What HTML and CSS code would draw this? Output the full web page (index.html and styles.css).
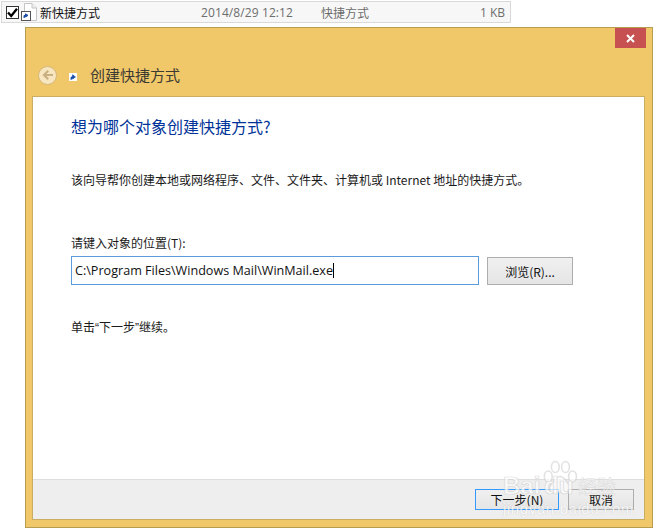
FILE: index.html
```html
<!DOCTYPE html>
<html lang="zh-CN">
<head>
<meta charset="utf-8">
<title>创建快捷方式</title>
<link rel="stylesheet" href="styles.css">
</head>
<body>
<div class="file-row">
  <span class="check"><svg width="11" height="11" viewBox="0 0 11 11"><path d="M1 5.5 4.2 9 10 1.8" fill="none" stroke="#000" stroke-width="2.4"/></svg></span>
  <svg class="file-icon" width="16" height="18" viewBox="0 0 16 18">
    <path d="M3.5.5H11L15.5 5V17.5H3.5Z" fill="#fff" stroke="#c4c4c4"/>
    <path d="M11 .5V5H15.5" fill="#f0f0f0" stroke="#c4c4c4"/>
    <rect x=".5" y="8.5" width="9" height="9" fill="#fff" stroke="#555"/>
    <path d="M3 15V12.5H6M4.5 10.8 7 12.4 4.5 14Z" fill="#1c4fa8" stroke="#1c4fa8"/>
  </svg>
  <span class="file-name">新快捷方式</span>
  <span class="file-date">2014/8/29 12:12</span>
  <span class="file-type">快捷方式</span>
  <span class="file-size">1 KB</span>
</div>
<div class="window">
  <div class="titlebar">
    <span class="close"><svg width="9" height="9" viewBox="0 0 9 9"><path d="M1 1 8 8M8 1 1 8" stroke="#fff" stroke-width="2"/></svg></span>
  </div>
  <div class="header">
    <span class="back"><svg width="12" height="12" viewBox="0 0 12 12"><path d="M11 6H2.5M6.2 1.8 2 6 6.2 10.2" fill="none" stroke="#c9b184" stroke-width="2.2"/></svg></span>
    <svg class="small-icon" width="8" height="8" viewBox="0 0 8 8"><rect width="8" height="8" fill="#fff"/><path d="M2 7V4H4.5M3.6 1.8 6.4 4 3.6 6Z" fill="#1c4fa8" stroke="#1c4fa8" stroke-width=".8"/></svg>
    <span class="title">创建快捷方式</span>
  </div>
  <div class="panel">
    <div class="main">
      <h1 class="heading">想为哪个对象创建快捷方式?</h1>
      <p class="intro">该向导帮你创建本地或网络程序、文件、文件夹、计算机或 Internet 地址的快捷方式。</p>
      <label class="field-label">请键入对象的位置(T):</label>
      <div class="field-row">
        <div class="input"><span class="value">C:\Program Files\Windows Mail\WinMail.exe</span><span class="caret"></span></div>
        <span class="btn browse">浏览(R)...</span>
      </div>
      <p class="hint">单击“下一步”继续。</p>
    </div>
    <div class="footer">
      <span class="btn next">下一步(N)</span>
      <span class="btn cancel">取消</span>
    </div>
  </div>
</div>
<div class="watermark">
  <svg class="paw" width="36" height="36" viewBox="0 0 46 44">
    <g fill="#fff" stroke="#d6d6d6" stroke-width="2">
      <ellipse cx="8" cy="20" rx="5" ry="7"/>
      <ellipse cx="17" cy="8" rx="5" ry="7"/>
      <ellipse cx="30" cy="8" rx="5" ry="7"/>
      <ellipse cx="39" cy="20" rx="5" ry="7"/>
      <path d="M23 20C17 20 15 27 11 31 7 36 11 42 17 41 21 40 26 40 30 41 36 42 39 36 35 31 31 27 29 20 23 20Z"/>
    </g>
  </svg>
  <span class="wm-brand">Bai</span>
  <span class="wm-du">du</span>
  <span class="wm-cn">经验</span>
  <span class="wm-url">jingyan.baidu.com</span>
</div>
</body>
</html>
```
FILE: styles.css
```css
* { box-sizing: border-box; }
html, body { margin: 0; padding: 0; }
body {
  width: 655px;
  height: 531px;
  overflow: hidden;
  position: relative;
  background: #fff;
  font-family: "Noto Sans CJK SC", "Noto Sans", sans-serif;
  font-size: 12px;
  color: #1a1a1a;
}
.file-row {
  display: flex;
  align-items: center;
  width: 510px;
  height: 22px;
  margin: 1px 0 0 1px;
  border: 1px solid #d9d9d9;
  background: #f7f7f7;
}
.check {
  display: flex;
  align-items: center;
  justify-content: center;
  width: 13px;
  height: 13px;
  margin-left: 4px;
  border: 1px solid #333;
  background: #fff;
}
.file-icon { margin-left: 2px; }
.file-name { margin-left: 3px; width: 161px; color: #111; }
.file-date { width: 120px; color: #6d6d6d; font-family: "Open Sans", sans-serif; letter-spacing: .1px; }
.file-type { width: 159px; color: #6d6d6d; }
.file-size { color: #6d6d6d; font-family: "Open Sans", sans-serif; white-space: nowrap; }
.window {
  display: flex;
  flex-direction: column;
  width: 628px;
  height: 501px;
  margin: 4px 0 0 25px;
  border: 1px solid #b89c52;
  background: #f0c869;
}
.titlebar { display: flex; justify-content: flex-end; height: 20px; padding-right: 6px; }
.close {
  display: flex;
  align-items: center;
  justify-content: center;
  width: 31px;
  height: 20px;
  background: #c75050;
}
.header { display: flex; align-items: center; height: 48px; padding: 6px 0 0 12px; }
.back {
  display: flex;
  align-items: center;
  justify-content: center;
  width: 19px;
  height: 19px;
  border: 1.5px solid #d5b77a;
  border-radius: 50%;
  background: #f7e6c0;
}
.small-icon { margin-left: 12px; margin-top: 4px; }
.title { margin-left: 13px; font-size: 15px; line-height: 20px; color: #3c3a33; }
.panel {
  display: flex;
  flex-direction: column;
  width: 613px;
  height: 424px;
  margin-left: 6px;
  border: 1px solid #c9ad62;
  background: #fff;
}
.main { flex: 1; padding: 19px 0 0 38px; }
.heading { margin: 0; font-size: 16px; font-weight: 400; line-height: 20px; color: #003399; }
.intro { margin: 35px 0 0; line-height: 18px; }
.field-label { display: block; margin-top: 45px; line-height: 18px; }
.field-row { display: flex; margin-top: 4px; }
.input {
  display: flex;
  align-items: center;
  width: 408px;
  height: 29px;
  padding-left: 3px;
  border: 1px solid #5a9bdc;
  background: #fff;
}
.value { font-family: "Open Sans", sans-serif; font-size: 12.6px; color: #111; white-space: nowrap; }
.caret { width: 1px; height: 15px; background: #000; }
.btn {
  display: flex;
  align-items: center;
  justify-content: center;
  border: 1px solid #adadad;
  background: linear-gradient(#f0f0f0, #e5e5e5);
  color: #111;
}
.browse { width: 86px; height: 28px; margin: 1px 0 0 8px; }
.hint { margin: 34px 0 0; line-height: 18px; font-family: "Liberation Sans", "Noto Sans CJK SC", sans-serif; }
.footer {
  display: flex;
  justify-content: flex-end;
  gap: 9px;
  height: 40px;
  padding: 9px 10px 0 0;
  border-top: 1px solid #dedede;
  background: #eeeeee;
}
.next { width: 84px; height: 21px; border-color: #3399ff; }
.cancel { width: 66px; height: 21px; }
.watermark {
  position: absolute;
  left: 503px;
  top: 460px;
  width: 116px;
  height: 56px;
  opacity: .7;
  pointer-events: none;
}
.paw { position: absolute; left: 39px; top: 0; }
.wm-brand, .wm-du {
  position: absolute;
  top: 15px;
  font-family: "Liberation Sans", sans-serif;
  font-size: 24px;
  font-weight: 700;
  line-height: 22px;
  color: #fff;
  -webkit-text-stroke: .7px #cfcfcf;
}
.wm-brand { left: 0; }
.wm-du { left: 41px; }
.wm-cn {
  position: absolute;
  left: 75px;
  top: 16px;
  font-size: 19px;
  line-height: 20px;
  color: #fff;
  -webkit-text-stroke: .5px #cfcfcf;
}
.wm-url {
  position: absolute;
  left: 0;
  top: 42px;
  font-family: "Liberation Sans", sans-serif;
  font-size: 15px;
  line-height: 13px;
  letter-spacing: .6px;
  color: #fff;
  white-space: nowrap;
  text-shadow: 0 0 1px #aaa;
}
```
